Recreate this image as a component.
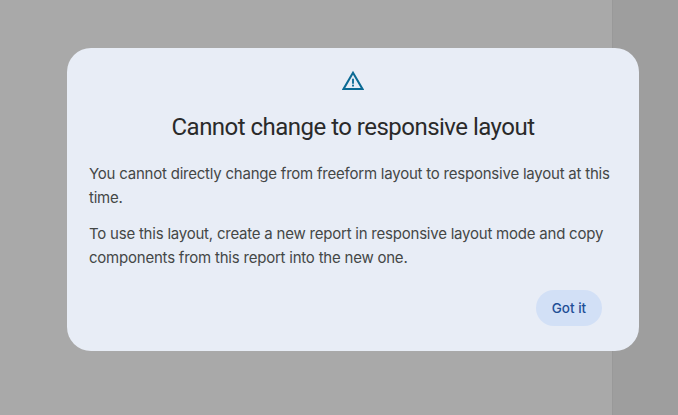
<div class="page">
  <div class="main"></div>
  <div class="side"></div>
  <div class="scrim">
    <div class="dialog" role="dialog" aria-labelledby="dlg-title">
      <svg class="icon" width="22" height="22" viewBox="0 0 24 24" aria-hidden="true">
        <path d="M12 3 22.3 20.6H1.7Z" fill="none" stroke="#0b6a94" stroke-width="2.2" stroke-linejoin="miter"/>
        <rect x="11" y="9.5" width="2" height="5.5" fill="#0b6a94"/>
        <rect x="11" y="16" width="2" height="2" fill="#0b6a94"/>
      </svg>
      <h1 id="dlg-title">Cannot change to responsive layout</h1>
      <p>You cannot directly change from freeform layout to responsive layout at this time.</p>
      <p>To use this layout, create a new report in responsive layout mode and copy components from this report into the new one.</p>
      <div class="actions"><button>Got it</button></div>
    </div>
  </div>
</div>

<style>
  :global(body) { margin: 0; }
  .page { display: flex; width: 678px; height: 415px; position: relative; overflow: hidden; font-family: Inter, Roboto, sans-serif; }
  .main { width: 612px; background: #a9a9a9; border-right: 1px solid #999; }
  .side { flex: 1; background: #9e9e9e; }
  .scrim { position: absolute; left: 67px; top: 48px; }
  .dialog { box-sizing: border-box; width: 572px; height: 303px; background: #e8edf6; border-radius: 24px; padding: 22px 22px 0; display: flex; flex-direction: column; }
  .icon { align-self: center; }
  h1 { margin: 19px 0 19px; font: 400 24px/32px Roboto, sans-serif; letter-spacing: -0.52px; color: #2a2a2a; text-align: center; }
  p { margin: 0 0 12px; font-size: 15px; letter-spacing: -0.22px; line-height: 24px; color: #444746; }
  .actions { display: flex; justify-content: flex-end; padding: 8px 15px 0 0; }
  button { height: 36px; width: 66px; border: 0; border-radius: 18px; background: #d2e0f6; color: #1f4f96; font: 500 13.5px Inter, sans-serif; padding: 0; }
</style>
